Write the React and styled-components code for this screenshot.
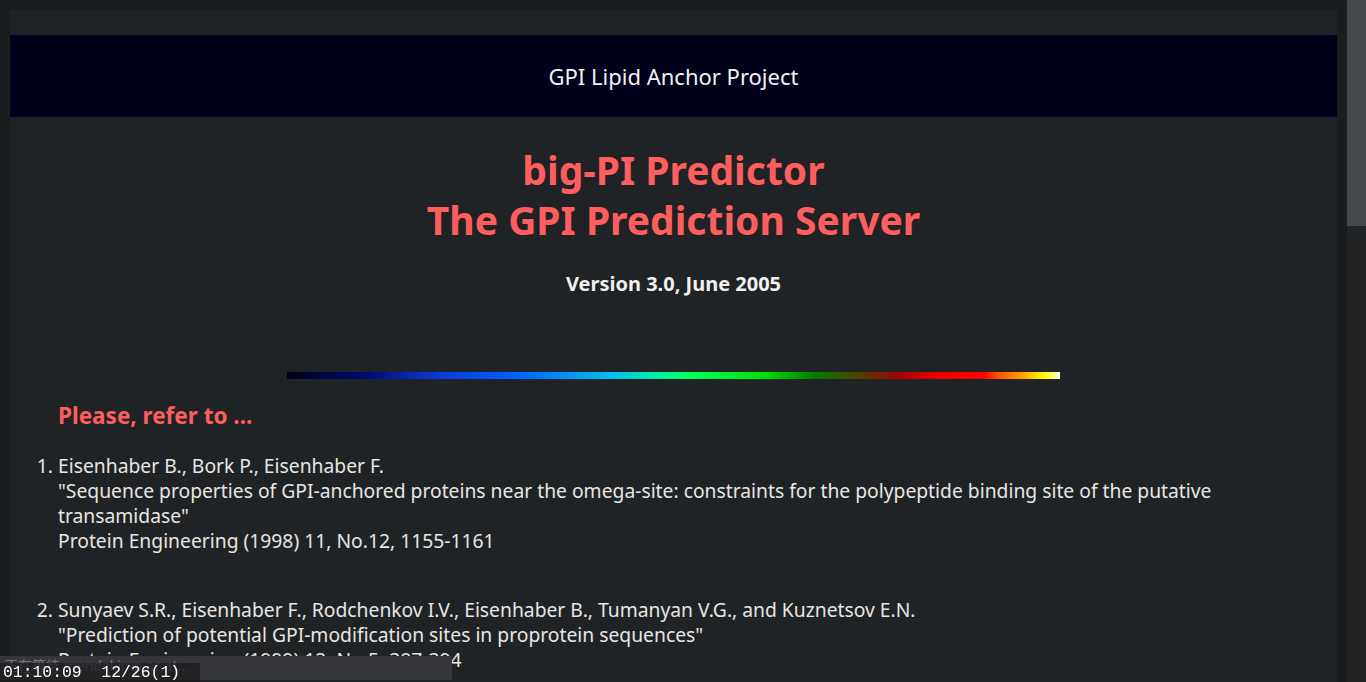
import React from "react";
import styled, { createGlobalStyle } from "styled-components";

// dark-mode render of the old big-PI predictor start page
const GlobalStyle = createGlobalStyle`
    html, body {
        margin: 0;
        height: 100%;
        overflow: hidden;
        background: #1b1c1d;
    }
`

const Frame = styled.div`
    display: flex;
    height: 100vh;
    background: #1b1c1d;
`

const Viewport = styled.div`
    flex: 1;
    overflow: hidden;
    font-family: "Noto Sans", "Open Sans", sans-serif;
    color: #e8e6e3;
`

const ScrollTrack = styled.div`
    width: 19px;
    flex-shrink: 0;
    background: #222324;
`

const Thumb = styled.div`
    height: 226px;
    background: #46494b;
`

const Page = styled.div`
    padding: 10px 10px 0 10px;
`

const Panel = styled.div`
    background: #202325;
    padding-top: 25px;
    min-height: 2040px;
`

const TopBand = styled.header`
    background: #00001a;
    height: 82px;
    display: flex;
    align-items: center;
    justify-content: center;
    font-size: 22px;
    color: #f2f2f2;
`

const TitleBlock = styled.div`
    text-align: center;
    padding-top: 28px;
`

const Title = styled.h1`
    margin: 0;
    font-size: 39px;
    line-height: 50px;
    font-weight: 700;
    color: #ff5e5e;
`

const Version = styled.h3`
    margin: 25px 0 0;
    font-size: 20px;
    font-weight: 700;
    color: #f0f0f0;
`

const Rainbow = styled.div`
    width: 773px;
    height: 7px;
    margin: 75px auto 0;
    background: linear-gradient(to right,
        #000018 0%, #000a70 10%, #0a3ce0 20%, #0064ff 30%, #00c0f0 42%,
        #00f0a0 48%, #00ff60 52%, #00e000 62%, #008000 68%, #504000 74%,
        #a00000 79%, #e80000 84%, #ff0000 90%, #ff5000 92%, #ffa000 95%,
        #ffff00 98%, #ffffa0 99.5%, #ffffff 100%);
`

const Refs = styled.section`
    padding: 21px 60px 0 48px;
`

const RefHeading = styled.h2`
    margin: 0 0 22px;
    font-size: 22.5px;
    font-weight: 700;
    color: #ff5e5e;
`

const RefList = styled.ol`
    margin: 0;
    padding: 0;
    font-size: 19.3px;
    line-height: 25px;
`

const RefItem = styled.li`
    margin-bottom: 44px;
`

const StatusBox = styled.div`
    position: fixed;
    left: 0;
    bottom: 2px;
    width: 452px;
    height: 24px;
    background: #35363a;
    color: #77787c;
    font-size: 14px;
    line-height: 20px;
    padding-left: 4px;
    box-sizing: border-box;
    font-family: "Noto Sans", "Noto Sans CJK SC", sans-serif;
`

const Clock = styled.div`
    position: fixed;
    left: 0;
    bottom: 0;
    width: 200px;
    height: 19px;
    background: rgba(28, 28, 30, 0.75);
    color: #ffffff;
    font-family: "Liberation Mono", monospace;
    font-size: 16.4px;
    line-height: 19px;
    padding-left: 3px;
    box-sizing: border-box;
    white-space: pre;
`

const refs = [
    {
        authors: "Eisenhaber B., Bork P., Eisenhaber F.",
        title: "\"Sequence properties of GPI-anchored proteins near the omega-site: constraints for the polypeptide binding site of the putative transamidase\"",
        source: "Protein Engineering (1998) 11, No.12, 1155-1161",
    },
    {
        authors: "Sunyaev S.R., Eisenhaber F., Rodchenkov I.V., Eisenhaber B., Tumanyan V.G., and Kuznetsov E.N.",
        title: "\"Prediction of potential GPI-modification sites in proprotein sequences\"",
        source: "Protein Engineering (1999) 12, No.5, 387-394",
    },
    {
        authors: "Eisenhaber B., Bork P., Eisenhaber F.",
        title: "\"Prediction of potential GPI-modification sites in proprotein sequences\"",
        source: "J. Mol. Biol. (1999) 292, 741-758",
    },
    {
        authors: "Eisenhaber B., Bork P., Yuan Y., Löffler G., Eisenhaber F.",
        title: "\"Automated annotation of GPI anchor sites: case study C. elegans\"",
        source: "Trends Biochem. Sci. (2000) 25, 340-341",
    },
    {
        authors: "Eisenhaber B., Wildpaner M., Schultz C.J., Borner G.H.H., Dupree P., Eisenhaber F.",
        title: "\"Glycosylphosphatidylinositol lipid anchoring of plant proteins. Sensitive prediction from sequence- and genome-wide studies for Arabidopsis and rice\"",
        source: "Plant Physiol. (2003) 133, 1691-1701",
    },
    {
        authors: "Eisenhaber B., Schneider G., Wildpaner M., Eisenhaber F.",
        title: "\"A sensitive predictor for potential GPI lipid modification sites in fungal protein sequences and its application to genome-wide studies for Aspergillus nidulans, Candida albicans, Neurospora crassa, Saccharomyces cerevisiae and Schizosaccharomyces pombe\"",
        source: "J. Mol. Biol. (2004) 337, 243-253",
    },
]

const App = () => {
    return (
        <Frame>
            <GlobalStyle />
            <Viewport>
                <Page>
                    <Panel>
                        <TopBand>GPI Lipid Anchor Project</TopBand>
                        <TitleBlock>
                            <Title>big-PI Predictor<br />The GPI Prediction Server</Title>
                            <Version>Version 3.0, June 2005</Version>
                        </TitleBlock>
                        <Rainbow />
                        <Refs>
                            <RefHeading>Please, refer to ...</RefHeading>
                            <RefList>
                                {refs.map((r, i) => (
                                    <RefItem key={i}>
                                        {r.authors}<br />
                                        {r.title}<br />
                                        {r.source}
                                    </RefItem>
                                ))}
                            </RefList>
                        </Refs>
                    </Panel>
                </Page>
            </Viewport>
            <ScrollTrack>
                <Thumb />
            </ScrollTrack>
            <StatusBox>正在等待 mendel.imp.ac.at...</StatusBox>
            <Clock>01:10:09  12/26(1)</Clock>
        </Frame>
    )
}

export default App;
